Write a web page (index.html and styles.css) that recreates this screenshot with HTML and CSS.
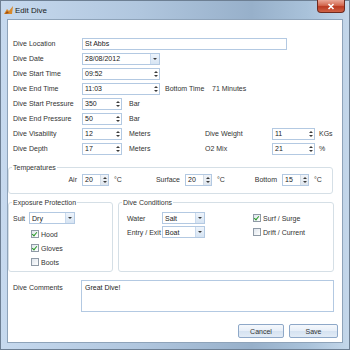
FILE: index.html
```html
<!doctype html>
<html lang="en">
  <head>
    <meta charset="UTF-8" />
    <title>Edit Dive</title>
    <link rel="stylesheet" href="styles.css">
  </head>
  <body>
    <div class="window">
      <div class="titlebar">
        <svg class="app-icon" width="9" height="8" viewBox="0 0 9 8">
          <path d="M0 8 L3 3 L5 5 L9 0 L8 8 Z" fill="#d98a2b"/>
          <path d="M1 8 L3 5 L5 7 Z" fill="#9c4d12"/>
        </svg>
        <span class="title">Edit Dive</span>
        <div class="close-btn">
          <svg width="8" height="7" viewBox="0 0 8 7"><path d="M1.5 1 L6.5 6 M6.5 1 L1.5 6" stroke="#fff" stroke-width="1.6"/></svg>
        </div>
      </div>

      <div class="client">
        <!-- main fields -->
        <div class="fields">
          <div class="row">
            <span class="lbl">Dive Location</span>
            <div class="box w-loc">St Abbs</div>
          </div>
          <div class="row">
            <span class="lbl">Dive Date</span>
            <div class="box w-date">28/08/2012<span class="drop"><i class="dn"></i></span></div>
          </div>
          <div class="row">
            <span class="lbl">Dive Start Time</span>
            <div class="box w-date">09:52<span class="spin"><i class="up"></i><i class="dn"></i></span></div>
          </div>
          <div class="row">
            <span class="lbl">Dive End Time</span>
            <div class="box w-date">11:03<span class="spin"><i class="up"></i><i class="dn"></i></span></div>
            <span class="bottom-lbl">Bottom Time</span>
            <span>71 Minutes</span>
          </div>
          <div class="row">
            <span class="lbl">Dive Start Pressure</span>
            <div class="box w-num">350<span class="spin"><i class="up"></i><i class="dn"></i></span></div>
            <span class="unit">Bar</span>
          </div>
          <div class="row">
            <span class="lbl">Dive End Pressure</span>
            <div class="box w-num">50<span class="spin"><i class="up"></i><i class="dn"></i></span></div>
            <span class="unit">Bar</span>
          </div>
          <div class="row">
            <span class="lbl">Dive Visability</span>
            <div class="box w-num">12<span class="spin"><i class="up"></i><i class="dn"></i></span></div>
            <span class="unit">Meters</span>
            <span class="lbl2">Dive Weight</span>
            <div class="box w-num2">11<span class="spin"><i class="up"></i><i class="dn"></i></span></div>
            <span class="unit2">KGs</span>
          </div>
          <div class="row">
            <span class="lbl">Dive Depth</span>
            <div class="box w-num">17<span class="spin"><i class="up"></i><i class="dn"></i></span></div>
            <span class="unit">Meters</span>
            <span class="lbl2">O2 Mix</span>
            <div class="box w-num2">21<span class="spin"><i class="up"></i><i class="dn"></i></span></div>
            <span class="unit2">%</span>
          </div>
        </div>

        <!-- temperatures -->
        <fieldset class="group temps">
          <legend>Temperatures</legend>
          <div class="temp-row">
            <span class="tlbl t-air">Air</span>
            <div class="box w-temp">20<span class="spin"><i class="up"></i><i class="dn"></i></span></div>
            <span class="deg">°C</span>
            <span class="tlbl t-surf">Surface</span>
            <div class="box w-temp">20<span class="spin"><i class="up"></i><i class="dn"></i></span></div>
            <span class="deg">°C</span>
            <span class="tlbl t-bot">Bottom</span>
            <div class="box w-temp">15<span class="spin"><i class="up"></i><i class="dn"></i></span></div>
            <span class="deg">°C</span>
          </div>
        </fieldset>

        <div class="groups">
          <fieldset class="group exposure">
            <legend>Exposure Protection</legend>
            <div class="suit-row">
              <span class="suit-lbl">Suit</span>
              <div class="box w-suit">Dry<span class="drop"><i class="dn"></i></span></div>
            </div>
            <div class="check-row first"><span class="check on"></span>Hood</div>
            <div class="check-row"><span class="check on"></span>Gloves</div>
            <div class="check-row"><span class="check"></span>Boots</div>
          </fieldset>

          <fieldset class="group conditions">
            <legend>Dive Conditions</legend>
            <div class="cond-row">
              <span class="cond-lbl">Water</span>
              <div class="box w-cond">Salt<span class="drop"><i class="dn"></i></span></div>
              <span class="check on"></span>Surf / Surge
            </div>
            <div class="cond-row">
              <span class="cond-lbl">Entry / Exit</span>
              <div class="box w-cond">Boat<span class="drop"><i class="dn"></i></span></div>
              <span class="check"></span>Drift / Current
            </div>
          </fieldset>
        </div>

        <div class="comments">
          <span class="lbl comments-lbl">Dive Comments</span>
          <div class="memo">Great Dive!</div>
        </div>

        <div class="buttons">
          <button class="btn btn-cancel">Cancel</button>
          <button class="btn btn-save">Save</button>
        </div>
      </div>
    </div>
  </body>
</html>
```

FILE: styles.css
```css
body {
  margin: 0;
  font-family: 'Liberation Sans', Arial, sans-serif;
  font-size: 7px;
  color: #333;
}

.window {
  width: 350px;
  height: 350px;
  box-sizing: border-box;
  display: flex;
  flex-direction: column;
  border: 1px solid #6d7f93;
  background: linear-gradient(to right, #c6d9ee, #b0c6de 40%, #97b0ca 72%, #a9c2da 88%, #c4d7ea);
}

.titlebar {
  height: 18px;
  display: flex;
  align-items: center;
  padding-left: 3px;
  position: relative;
}

.app-icon {
  margin-right: 2px;
}

.title {
  font-size: 8px;
  color: #1a1a1a;
}

.close-btn {
  position: absolute;
  top: -1px;
  right: 4px;
  width: 26px;
  height: 12px;
  display: flex;
  align-items: center;
  justify-content: center;
  border: 1px solid #6e2a1f;
  border-top: none;
  border-radius: 0 0 4px 4px;
  background: linear-gradient(#eaa898, #d3684f 45%, #bb3a22 55%, #cf6346);
}

.client {
  flex: 1;
  margin: 0 6px 6px;
  background: #fff;
  border: 1px solid #8ea3b9;
}

.fields {
  padding: 16px 0 0 5px;
}

.row {
  height: 15px;
  display: flex;
  align-items: center;
}

.lbl {
  width: 69px;
  flex-shrink: 0;
}

.box {
  height: 10px;
  box-sizing: content-box;
  display: flex;
  align-items: center;
  padding-left: 2px;
  border: 1px solid #b3c9e2;
  background: #fff;
  flex-shrink: 0;
  color: #222;
}

.w-loc { width: 201px; }
.w-date { width: 74px; }
.w-num { width: 36px; }
.w-num2 { width: 39px; }
.w-temp { width: 23px; }
.w-suit { width: 42px; }
.w-cond { width: 39px; }

.spin,
.drop {
  margin-left: auto;
  width: 7px;
  height: 10px;
  display: flex;
  flex-direction: column;
  align-items: center;
  justify-content: center;
  gap: 2px;
}

.drop {
  width: 8px;
  border-left: 1px solid #c9daee;
  background: linear-gradient(#eef4fb, #d6e4f3);
}

.temps .spin {
  background: linear-gradient(#f1f4f8, #dfe6ee);
  border-left: 1px solid #d3dce6;
}

.up,
.dn {
  width: 0;
  height: 0;
  border-left: 2px solid transparent;
  border-right: 2px solid transparent;
}

.up { border-bottom: 2px solid #3a3a3a; }
.dn { border-top: 2px solid #3a3a3a; }

.unit {
  margin-left: 7px;
  width: 76px;
  flex-shrink: 0;
}

.bottom-lbl {
  margin-left: 5px;
  width: 47px;
}

.lbl2 {
  width: 67px;
  flex-shrink: 0;
}

.unit2 {
  margin-left: 4px;
}

/* group boxes */
.group {
  margin: 0;
  padding: 0;
  min-width: 0;
  border: 1px solid #d5dfe6;
  border-radius: 3px;
}

.group legend {
  margin-left: 3px;
  padding: 0 1px;
  line-height: 9px;
}

.temps {
  margin: 7px 9px 0 0;
  padding-bottom: 6px;
}

.temp-row {
  height: 15px;
  display: flex;
  align-items: center;
}

.tlbl {
  text-align: right;
  padding-right: 5px;
  box-sizing: border-box;
  flex-shrink: 0;
}

.t-air { width: 73px; }
.t-surf { width: 56px; }
.t-bot { width: 50px; }

.deg {
  width: 20px;
  padding-left: 5px;
  box-sizing: border-box;
}

.groups {
  display: flex;
  gap: 5px;
  margin-top: 4px;
}

.exposure {
  width: 105px;
  box-sizing: border-box;
  padding: 5px 0 2px;
}

.conditions {
  width: 216px;
  box-sizing: border-box;
  padding: 4px 0 0;
}

.suit-row {
  height: 12px;
  display: flex;
  align-items: center;
  padding-left: 4px;
}

.suit-lbl {
  width: 16px;
}

.check-row {
  height: 14px;
  display: flex;
  align-items: center;
  padding-left: 22px;
}

.check-row.first {
  margin-top: 3px;
}

.check {
  width: 6px;
  height: 6px;
  margin-right: 2px;
  border: 1px solid #8f9aa6;
  background: linear-gradient(135deg, #dfe5ec, #fff);
  flex-shrink: 0;
  position: relative;
}

.check.on::after {
  content: '';
  position: absolute;
  left: 1px;
  top: 0;
  width: 2px;
  height: 4px;
  border: solid #2a9a2a;
  border-width: 0 1px 1px 0;
  transform: rotate(40deg);
}

.cond-row {
  height: 14px;
  display: flex;
  align-items: center;
  padding-left: 8px;
}

.cond-lbl {
  width: 35px;
}

.cond-row .check {
  margin-left: 48px;
}

.comments {
  display: flex;
  padding-left: 5px;
  margin-top: 8px;
}

.comments-lbl {
  padding-top: 4px;
  width: 68px;
}

.memo {
  width: 248px;
  height: 27px;
  padding: 3px 0 0 3px;
  box-sizing: content-box;
  border: 1px solid #b3c9e2;
  color: #222;
}

.buttons {
  display: flex;
  justify-content: flex-end;
  gap: 5px;
  padding-right: 4px;
  margin-top: 12px;
}

.btn {
  height: 14px;
  padding: 0;
  font-family: inherit;
  font-size: 7px;
  color: #333;
  border: 1px solid #8ea8c8;
  border-radius: 2px;
  background: linear-gradient(#f5f8fc, #e6eef8 50%, #d5e2f1 51%, #e2ebf6);
}

.btn-cancel { width: 46px; }
.btn-save { width: 49px; }
```
